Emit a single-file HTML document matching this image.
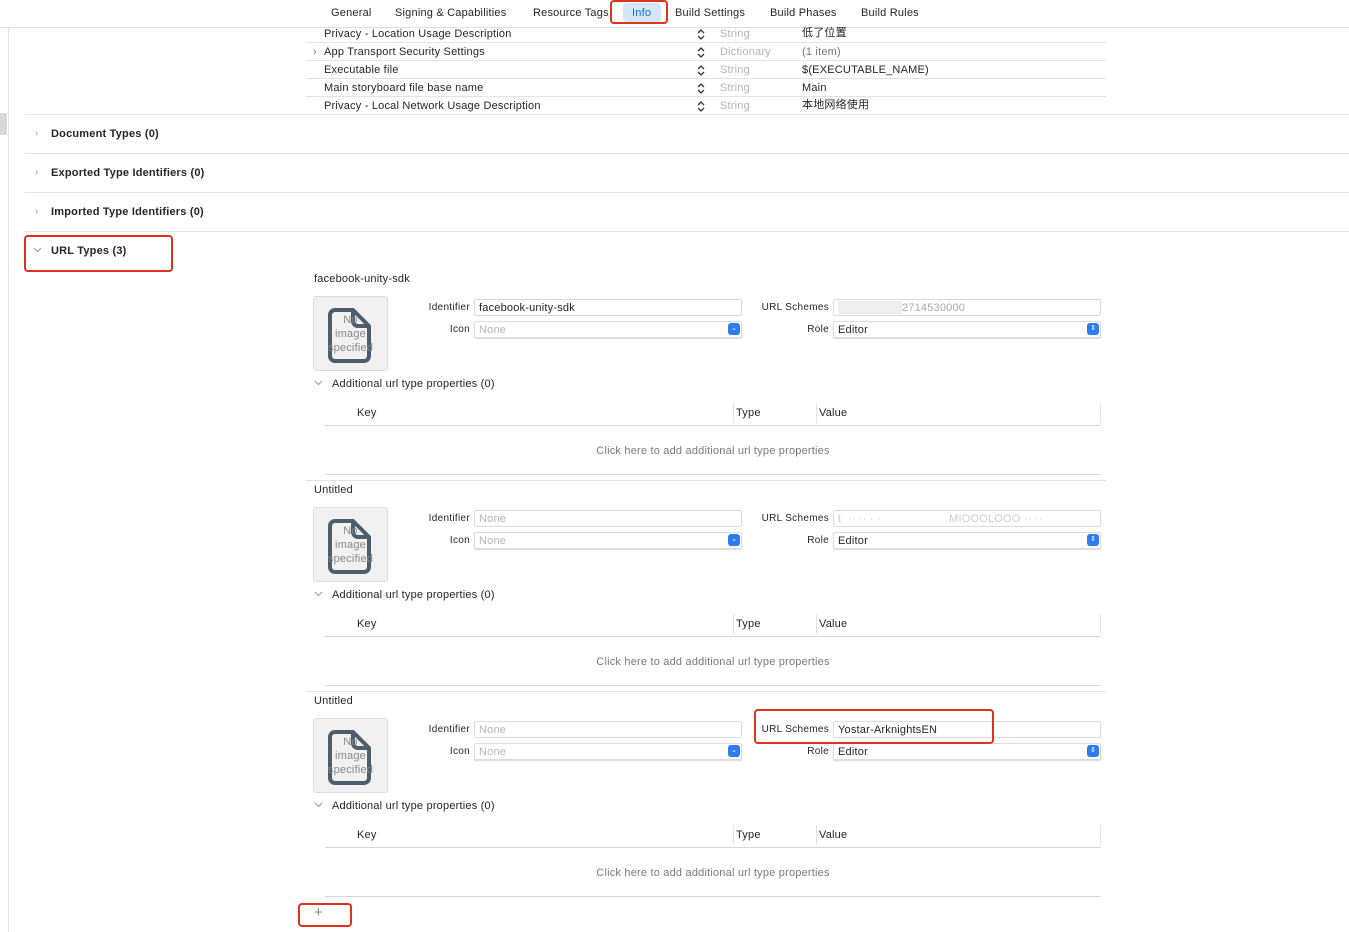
<!DOCTYPE html>
<html><head><meta charset="utf-8"><style>
*{margin:0;padding:0;box-sizing:border-box}
body{width:1349px;height:932px;background:#fff;font-family:"Liberation Sans","Noto Sans CJK SC",sans-serif;font-size:11px;line-height:14px;letter-spacing:0.2px;color:#262626;position:relative;overflow:hidden}
.a{position:absolute;white-space:nowrap}
.hl{position:absolute;height:1px;background:#e3e3e3}
.red{position:absolute;border:2px solid #e0301e;border-radius:4px}
.tab{position:absolute;top:6px;font-size:11px}
.row{position:absolute;left:324px;font-size:11px}
.gray{color:#b5b5b5}
.sec{position:absolute;left:51px;font-weight:bold;font-size:11px}
.chev{position:absolute;left:35px;color:#999;font-size:10px}
.blk{position:absolute;left:0;width:1349px;height:211px}
.fld{position:absolute;height:17px;border:1px solid #dcdcdc;border-radius:2px;background:#fff;padding-left:4px;line-height:16px;font-size:11px}
.pop{box-shadow:0 1px 1px rgba(0,0,0,.15)}
.lbl{position:absolute;text-align:right;font-size:10px;line-height:18px;letter-spacing:0.3px}
.blue{position:absolute;width:12px;height:12px;border-radius:3px;background:#2d7cf0;color:#fff;font-size:7px;line-height:12px;text-align:center;letter-spacing:0}
</style></head><body>
<div style="position:absolute;left:8px;top:27px;width:1px;height:905px;background:#e3e3e3"></div>
<div style="position:absolute;left:0;top:113px;width:7px;height:22px;background:#d8d8d8"></div>
<div class="hl" style="left:0;top:27px;width:1349px;background:#e0e0e0"></div>
<div class="tab" style="left:331px">General</div>
<div class="tab" style="left:395px">Signing &amp; Capabilities</div>
<div class="tab" style="left:533px">Resource Tags</div>
<div style="position:absolute;left:623px;top:3px;width:38px;height:19px;background:#d3e6fb;border-radius:4px"></div>
<div class="tab" style="left:632px;color:#1a6fd6">Info</div>
<div class="red" style="left:610px;top:0;width:58px;height:24px"></div>
<div class="tab" style="left:675px">Build Settings</div>
<div class="tab" style="left:770px">Build Phases</div>
<div class="tab" style="left:861px">Build Rules</div>
<div class="row" style="top:27px">Privacy - Location Usage Description</div>
<div class="row" style="top:45px">App Transport Security Settings</div>
<div class="a" style="left:313px;top:45px;color:#777">›</div>
<div class="row" style="top:63px">Executable file</div>
<div class="row" style="top:81px">Main storyboard file base name</div>
<div class="row" style="top:99px">Privacy - Local Network Usage Description</div>
<div class="a gray" style="left:720px;top:27px">String</div><div class="a" style="left:802px;top:26px">低了位置</div>
<div class="a gray" style="left:720px;top:45px">Dictionary</div><div class="a" style="left:802px;top:45px;color:#777">(1 item)</div>
<div class="a gray" style="left:720px;top:63px">String</div><div class="a" style="left:802px;top:63px">$(EXECUTABLE_NAME)</div>
<div class="a gray" style="left:720px;top:81px">String</div><div class="a" style="left:802px;top:81px">Main</div>
<div class="a gray" style="left:720px;top:99px">String</div><div class="a" style="left:802px;top:98px">本地网络使用</div>
<svg class="a" style="left:695px;top:27px" width="12" height="90" fill="none" stroke="#333" stroke-width="1.3">
<path d="M3 6l3-3 3 3M3 9l3 3 3-3"/><path d="M3 24l3-3 3 3M3 27l3 3 3-3"/><path d="M3 42l3-3 3 3M3 45l3 3 3-3"/><path d="M3 60l3-3 3 3M3 63l3 3 3-3"/><path d="M3 78l3-3 3 3M3 81l3 3 3-3"/></svg>
<div class="hl" style="left:306px;top:42px;width:800px"></div>
<div class="hl" style="left:306px;top:60px;width:800px"></div>
<div class="hl" style="left:306px;top:78px;width:800px"></div>
<div class="hl" style="left:306px;top:96px;width:800px"></div>
<div class="hl" style="left:25px;top:114px;width:1324px"></div>
<div class="chev" style="top:127px">›</div><div class="sec" style="top:127px">Document Types (0)</div>
<div class="hl" style="left:25px;top:153px;width:1324px"></div>
<div class="chev" style="top:166px">›</div><div class="sec" style="top:166px">Exported Type Identifiers (0)</div>
<div class="hl" style="left:25px;top:192px;width:1324px"></div>
<div class="chev" style="top:205px">›</div><div class="sec" style="top:205px">Imported Type Identifiers (0)</div>
<div class="hl" style="left:25px;top:231px;width:1324px"></div>
<svg class="a" style="left:33px;top:247px" width="9" height="6" fill="none" stroke="#999" stroke-width="1"><path d="M1 1l3.5 3.5L8 1"/></svg>
<div class="sec" style="top:244px">URL Types (3)</div>
<div class="red" style="left:24px;top:235px;width:149px;height:37px"></div>

<div class="blk" style="top:270px">
 <div class="a" style="left:314px;top:2px">facebook-unity-sdk</div>
 <div style="position:absolute;left:313px;top:26px;width:75px;height:75px;background:#f1f1f1;border:1px solid #ddd;border-radius:3px"></div>
 <svg class="a" style="left:328px;top:38px" width="44" height="56" fill="none" stroke="#4d5d6b" stroke-width="4" stroke-linejoin="round"><path d="M7 2h18l16 16v30a5 5 0 0 1-5 5H7a5 5 0 0 1-5-5V7a5 5 0 0 1 5-5z"/><path d="M25 2v11a5 5 0 0 0 5 5h11"/></svg>
 <div class="a" style="left:313px;top:43px;width:75px;text-align:center;color:#888;font-size:11px;line-height:14px;white-space:normal">No<br>image<br>specified</div>
 <div class="lbl" style="left:400px;top:29px;width:70px">Identifier</div>
 <div class="fld" style="left:474px;top:29px;width:268px">facebook-unity-sdk</div>
 <div class="lbl" style="left:400px;top:51px;width:70px">Icon</div>
 <div class="fld pop gray" style="left:474px;top:51px;width:268px">None</div><div class="blue" style="left:728px;top:53px">⌄</div>
 <div class="lbl" style="left:740px;top:29px;width:89px">URL Schemes</div>
 <div class="fld" style="left:833px;top:29px;width:268px;color:#aaa"><span style="background:#eee;color:#eee">████████</span>2714530000</div>
 <div class="lbl" style="left:740px;top:51px;width:89px">Role</div>
 <div class="fld pop" style="left:833px;top:51px;width:268px">Editor</div><div class="blue" style="left:1087px;top:53px">⇕</div>
 <svg class="a" style="left:314px;top:110px" width="9" height="6" fill="none" stroke="#999"><path d="M1 1l3.5 3.5L8 1"/></svg>
 <div class="a" style="left:332px;top:107px">Additional url type properties (0)</div>
 <div class="a" style="left:357px;top:136px">Key</div>
 <div style="position:absolute;left:733px;top:133px;width:1px;height:20px;background:#e3e3e3"></div>
 <div class="a" style="left:736px;top:136px">Type</div>
 <div style="position:absolute;left:816px;top:133px;width:1px;height:20px;background:#e3e3e3"></div>
 <div class="a" style="left:819px;top:136px">Value</div>
 <div style="position:absolute;left:1100px;top:133px;width:1px;height:20px;background:#e3e3e3"></div>
 <div class="hl" style="left:325px;top:155px;width:776px;background:#d8d8d8"></div>
 <div class="a" style="left:325px;top:174px;width:776px;text-align:center;color:#7a7a7a">Click here to add additional url type properties</div>
 <div class="hl" style="left:325px;top:204px;width:776px;background:#d8d8d8"></div>
 <div class="hl" style="left:306px;top:210px;width:800px"></div>
</div>

<div class="blk" style="top:481px">
 <div class="a" style="left:314px;top:2px">Untitled</div>
 <div style="position:absolute;left:313px;top:26px;width:75px;height:75px;background:#f1f1f1;border:1px solid #ddd;border-radius:3px"></div>
 <svg class="a" style="left:328px;top:38px" width="44" height="56" fill="none" stroke="#4d5d6b" stroke-width="4" stroke-linejoin="round"><path d="M7 2h18l16 16v30a5 5 0 0 1-5 5H7a5 5 0 0 1-5-5V7a5 5 0 0 1 5-5z"/><path d="M25 2v11a5 5 0 0 0 5 5h11"/></svg>
 <div class="a" style="left:313px;top:43px;width:75px;text-align:center;color:#888;font-size:11px;line-height:14px;white-space:normal">No<br>image<br>specified</div>
 <div class="lbl" style="left:400px;top:29px;width:70px">Identifier</div>
 <div class="fld gray" style="left:474px;top:29px;width:268px">None</div>
 <div class="lbl" style="left:400px;top:51px;width:70px">Icon</div>
 <div class="fld pop gray" style="left:474px;top:51px;width:268px">None</div><div class="blue" style="left:728px;top:53px">⌄</div>
 <div class="lbl" style="left:740px;top:29px;width:89px">URL Schemes</div>
 <div class="fld" style="left:833px;top:29px;width:268px;color:#ccc">t&nbsp; ·· ·· · ·&nbsp;&nbsp;&nbsp;&nbsp;&nbsp;&nbsp;&nbsp;&nbsp;&nbsp;&nbsp;&nbsp;&nbsp;&nbsp;&nbsp;&nbsp;&nbsp;&nbsp;&nbsp;&nbsp;&nbsp; MIOOOLOOO ·· ··</div>
 <div class="lbl" style="left:740px;top:51px;width:89px">Role</div>
 <div class="fld pop" style="left:833px;top:51px;width:268px">Editor</div><div class="blue" style="left:1087px;top:53px">⇕</div>
 <svg class="a" style="left:314px;top:110px" width="9" height="6" fill="none" stroke="#999"><path d="M1 1l3.5 3.5L8 1"/></svg>
 <div class="a" style="left:332px;top:107px">Additional url type properties (0)</div>
 <div class="a" style="left:357px;top:136px">Key</div>
 <div style="position:absolute;left:733px;top:133px;width:1px;height:20px;background:#e3e3e3"></div>
 <div class="a" style="left:736px;top:136px">Type</div>
 <div style="position:absolute;left:816px;top:133px;width:1px;height:20px;background:#e3e3e3"></div>
 <div class="a" style="left:819px;top:136px">Value</div>
 <div style="position:absolute;left:1100px;top:133px;width:1px;height:20px;background:#e3e3e3"></div>
 <div class="hl" style="left:325px;top:155px;width:776px;background:#d8d8d8"></div>
 <div class="a" style="left:325px;top:174px;width:776px;text-align:center;color:#7a7a7a">Click here to add additional url type properties</div>
 <div class="hl" style="left:325px;top:204px;width:776px;background:#d8d8d8"></div>
 <div class="hl" style="left:306px;top:210px;width:800px"></div>
</div>

<div class="blk" style="top:692px">
 <div class="a" style="left:314px;top:2px">Untitled</div>
 <div style="position:absolute;left:313px;top:26px;width:75px;height:75px;background:#f1f1f1;border:1px solid #ddd;border-radius:3px"></div>
 <svg class="a" style="left:328px;top:38px" width="44" height="56" fill="none" stroke="#4d5d6b" stroke-width="4" stroke-linejoin="round"><path d="M7 2h18l16 16v30a5 5 0 0 1-5 5H7a5 5 0 0 1-5-5V7a5 5 0 0 1 5-5z"/><path d="M25 2v11a5 5 0 0 0 5 5h11"/></svg>
 <div class="a" style="left:313px;top:43px;width:75px;text-align:center;color:#888;font-size:11px;line-height:14px;white-space:normal">No<br>image<br>specified</div>
 <div class="lbl" style="left:400px;top:29px;width:70px">Identifier</div>
 <div class="fld gray" style="left:474px;top:29px;width:268px">None</div>
 <div class="lbl" style="left:400px;top:51px;width:70px">Icon</div>
 <div class="fld pop gray" style="left:474px;top:51px;width:268px">None</div><div class="blue" style="left:728px;top:53px">⌄</div>
 <div class="lbl" style="left:740px;top:29px;width:89px">URL Schemes</div>
 <div class="fld" style="left:833px;top:29px;width:268px">Yostar-ArknightsEN</div>
 <div class="lbl" style="left:740px;top:51px;width:89px">Role</div>
 <div class="fld pop" style="left:833px;top:51px;width:268px">Editor</div><div class="blue" style="left:1087px;top:53px">⇕</div>
 <div class="red" style="left:754px;top:17px;width:240px;height:35px"></div>
 <svg class="a" style="left:314px;top:110px" width="9" height="6" fill="none" stroke="#999"><path d="M1 1l3.5 3.5L8 1"/></svg>
 <div class="a" style="left:332px;top:107px">Additional url type properties (0)</div>
 <div class="a" style="left:357px;top:136px">Key</div>
 <div style="position:absolute;left:733px;top:133px;width:1px;height:20px;background:#e3e3e3"></div>
 <div class="a" style="left:736px;top:136px">Type</div>
 <div style="position:absolute;left:816px;top:133px;width:1px;height:20px;background:#e3e3e3"></div>
 <div class="a" style="left:819px;top:136px">Value</div>
 <div style="position:absolute;left:1100px;top:133px;width:1px;height:20px;background:#e3e3e3"></div>
 <div class="hl" style="left:325px;top:155px;width:776px;background:#d8d8d8"></div>
 <div class="a" style="left:325px;top:174px;width:776px;text-align:center;color:#7a7a7a">Click here to add additional url type properties</div>
 <div class="hl" style="left:325px;top:204px;width:776px;background:#d8d8d8"></div>
</div>
<div class="a" style="left:314px;top:906px;font-size:15px;color:#888">+</div>
<div class="red" style="left:298px;top:903px;width:54px;height:24px"></div>
</body></html>
